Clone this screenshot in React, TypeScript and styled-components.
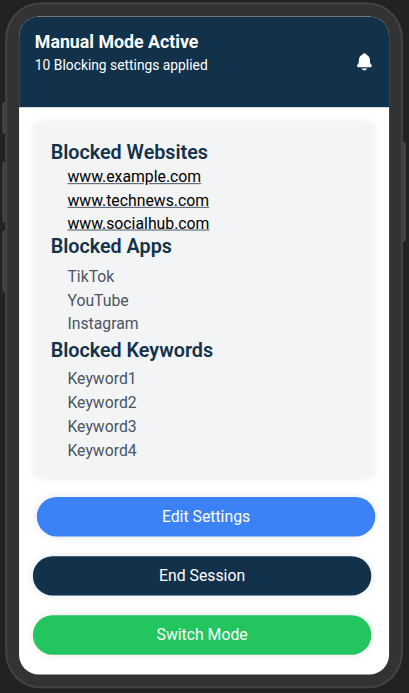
import React from "react";
import styled, { createGlobalStyle } from "styled-components";
import { IoNotifications } from "react-icons/io5";

const GlobalStyle = createGlobalStyle`
  *, *::before, *::after { box-sizing: border-box; }
  html, body { margin: 0; height: 100%; overflow: hidden; background: #222; }
  body { font-family: Roboto, sans-serif; }
  ul, h1, h2, p { margin: 0; padding: 0; }
`;

const Stage = styled.div`
  height: 693px;
  padding: 2px 0 0 5px;
  overflow: hidden;
  background: #222;
`;

const Phone = styled.div`
  position: relative;
  width: 403px;
  height: 695px;
  padding: 12px;
  border: 2px solid #444;
  border-radius: 36px;
  background: #333;
  transform: translate(0.25px, 0.6px) scale(0.9867);
  transform-origin: 0 0;
`;

const SideKey = styled.span<{ $side: "left" | "right"; $top: number; $height: number }>`
  position: absolute;
  ${(p) => p.$side}: -5px;
  top: ${(p) => p.$top}px;
  width: 3px;
  height: ${(p) => p.$height}px;
  background: #444;
  border-radius: ${(p) => (p.$side === "left" ? "2px 0 0 2px" : "0 2px 2px 0")};
`;

const Screen = styled.main`
  display: flex;
  flex-direction: column;
  width: 375px;
  height: 667px;
  overflow: hidden;
  border-radius: 20px;
  background: #fff;
`;

const Header = styled.header`
  display: flex;
  align-items: center;
  justify-content: space-between;
  flex: none;
  height: 92px;
  padding: 0 15px 0 16px;
  background: #12314a;
  color: #fff;
`;

const HeaderText = styled.div`
  height: 68px;
`;

const Title = styled.h1`
  font-size: 18px;
  line-height: 28px;
  font-weight: 700;
`;

const Subtitle = styled.p`
  font-size: 14px;
  line-height: 18px;
`;

const Card = styled.section`
  flex: none;
  height: 359px;
  margin: 16px 16px 0;
  padding: 16px;
  border-radius: 8px;
  background: #f3f4f6;
  box-shadow: 0 0 10px rgba(0, 0, 0, 0.08);
`;

const Heading = styled.h2`
  color: #12314a;
  font-size: 20px;
  line-height: 28px;
  font-weight: 600;
`;

const List = styled.ul<{ $before: number; $after: number; $line?: number }>`
  margin: ${(p) => p.$before}px 0 ${(p) => p.$after}px 17px;
  list-style: none;
  color: #4b5563;
  font-size: 16px;
  line-height: ${(p) => p.$line ?? 24}px;
`;

const SiteLink = styled.a`
  color: #000;
  text-decoration: underline #4b5563;
`;

const Actions = styled.div`
  display: flex;
  flex-direction: column;
  gap: 20px;
  padding: 20px 18px 0 14px;
`;

const Action = styled.button<{ $color: string; $indent?: number }>`
  flex: none;
  width: 343px;
  height: 40px;
  margin: 0 0 0 ${(p) => p.$indent ?? 0}px;
  padding: 0;
  border: 0;
  border-radius: 20px;
  background: ${(p) => p.$color};
  box-shadow: 0 0 10px rgba(0, 0, 0, 0.1);
  color: #fff;
  font: 400 16px/24px Roboto, sans-serif;
`;

const websites = ["www.example.com", "www.technews.com", "www.socialhub.com"];
const apps = ["TikTok", "YouTube", "Instagram"];
const keywords = ["Keyword1", "Keyword2", "Keyword3", "Keyword4"];

export default function App() {
  return (
    <Stage>
      <GlobalStyle />
      <Phone>
        <SideKey $side="left" $top={99} $height={32} />
        <SideKey $side="left" $top={159} $height={62} />
        <SideKey $side="left" $top={229} $height={62} />
        <SideKey $side="right" $top={139} $height={101} />
        <Screen>
          <Header>
            <HeaderText>
              <Title>Manual Mode Active</Title>
              <Subtitle>10 Blocking settings applied</Subtitle>
            </HeaderText>
            <IoNotifications size={20} />
          </Header>
          <Card>
            <Heading>Blocked Websites</Heading>
            <List $before={-1} $after={-2.5} $line={23.5}>
              {websites.map((site) => (
                <li key={site}><SiteLink>{site}</SiteLink></li>
              ))}
            </List>
            <Heading>Blocked Apps</Heading>
            <List $before={5} $after={0}>
              {apps.map((app) => <li key={app}>{app}</li>)}
            </List>
            <Heading>Blocked Keywords</Heading>
            <List $before={4} $after={0} $line={24.2}>
              {keywords.map((word) => <li key={word}>{word}</li>)}
            </List>
          </Card>
          <Actions>
            <Action $color="#3b82f6" $indent={4}>Edit Settings</Action>
            <Action $color="#12314a">End Session</Action>
            <Action $color="#22c55e">Switch Mode</Action>
          </Actions>
        </Screen>
      </Phone>
    </Stage>
  );
}
